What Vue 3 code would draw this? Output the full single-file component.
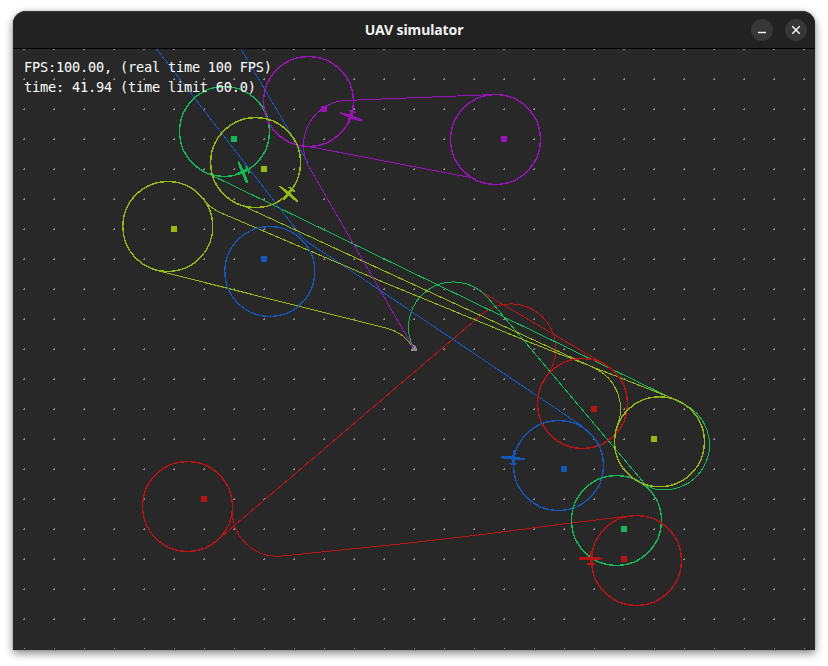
<script setup>
const RED = '#b81414'
const GREEN = '#14b857'
const BLUE = '#1457b8'
const YELLOW = '#98b814'
const PURPLE = '#9814b8'

const cols = Array.from({ length: 27 }, (_, i) => 24 + i * 30)
const rows = Array.from({ length: 21 }, (_, i) => 49 + i * 30)
const dots = rows.flatMap((y) =>
  cols.map((x) => `M${x} ${y - 1}h1v2h-2v-1h1z`)
).join('')

const routes = [
  { color: RED, d: 'M480 291L605.2 364.7' },
  { color: RED, d: 'M216.7 540.6L481.2 315A45 45 0 0 1 546.5 376.3' },
  { color: RED, d: 'M232.4 509A45 45 0 0 0 282 556L400 544L453 538L490 533.5L571 523L631 515.8' },
  { color: GREEN, d: 'M205 172L683.2 403.9A45 45 0 0 1 645.8 485.8' },
  { color: GREEN, d: 'M413.3 347.1A45 45 0 0 1 487.8 297.8L650.8 491' },
  { color: BLUE, d: 'M156.5 49L303 238.3Q308 243 330 256.7L583 426.7' },
  { color: BLUE, d: 'M241 49L308 163' },
  { color: YELLOW, d: 'M237 203L594.3 368A45 45 0 0 1 617.5 425.3' },
  { color: YELLOW, d: 'M202.3 198.2A45 45 0 0 0 219.4 212.2L380 280.8L530 342.4L676.8 400' },
  { color: YELLOW, d: 'M156.7 270.5L386 328A45 45 0 0 1 413.5 348' },
]

const homeward = 'M494 94.5L350 100.3A45 45 0 0 0 309.5 167.7L413.5 348M303 146.3L313 147.3L473 178'

const orbits = [
  { x: 224.5, y: 131.5, color: GREEN },
  { x: 269.8, y: 271.5, color: BLUE },
  { x: 308.5, y: 101.5, color: PURPLE },
  { x: 495.5, y: 139.5, color: PURPLE },
  { x: 582.5, y: 403.5, color: RED },
  { x: 187.5, y: 506.5, color: RED },
  { x: 558.5, y: 465.5, color: BLUE },
  { x: 616.5, y: 520.5, color: GREEN },
  { x: 636.5, y: 560.5, color: RED },
  { x: 255.6, y: 162.6, color: YELLOW },
  { x: 167.8, y: 226.5, color: YELLOW },
  { x: 659.5, y: 441.8, color: YELLOW },
]

const targets = [
  { x: 234, y: 139, color: GREEN },
  { x: 264, y: 169, color: YELLOW },
  { x: 174, y: 229, color: YELLOW },
  { x: 264, y: 259, color: BLUE },
  { x: 324, y: 109, color: PURPLE },
  { x: 504, y: 139, color: PURPLE },
  { x: 594, y: 409, color: RED },
  { x: 654, y: 439, color: YELLOW },
  { x: 564, y: 469, color: BLUE },
  { x: 624, y: 529, color: GREEN },
  { x: 624, y: 559, color: RED },
  { x: 204, y: 499, color: RED },
]

const uavs = [
  { x: 591.3, y: 558.6, heading: 0, color: RED },
  { x: 513.4, y: 458.2, heading: 5, color: BLUE },
  { x: 242.7, y: 171.9, heading: -113, color: GREEN },
  { x: 288.5, y: 193.6, heading: -140, color: YELLOW },
  { x: 350.7, y: 116.6, heading: -160, color: PURPLE },
]
</script>

<template>
  <main class="desktop">
    <section class="window">
      <header class="titlebar">
        <span class="spacer"></span>
        <h1 class="title">UAV simulator</h1>
        <div class="controls">
          <button class="control" aria-label="Minimize">
            <svg width="22" height="22"><path d="M7 13.5h8" /></svg>
          </button>
          <button class="control" aria-label="Close">
            <svg width="22" height="22"><path d="M7.3 7.3l7.4 7.4M14.7 7.3l-7.4 7.4" /></svg>
          </button>
        </div>
      </header>
      <div class="viewport">
        <svg class="scene" width="800" height="600" viewBox="14 49 800 600" shape-rendering="crispEdges">
          <path :d="dots" fill="#8c8c8c" />
          <g fill="none">
            <path v-for="(r, i) in routes" :key="i" :d="r.d" :stroke="r.color" stroke-width="1" />
            <circle v-for="(o, i) in orbits" :key="i" :cx="o.x" :cy="o.y" r="45" :stroke="o.color" stroke-width="1.3" />
          </g>
          <path d="M413 345h2v1h1v2h1v3h-6v-2h1v-2h1z" fill="#8c8c8c" />
          <path :d="homeward" fill="none" :stroke="PURPLE" />
          <rect v-for="(t, i) in targets" :key="i" :x="t.x - 3" :y="t.y - 3" width="6" height="6" :fill="t.color" />
          <g v-for="(u, i) in uavs" :key="i" :transform="`translate(${u.x} ${u.y}) rotate(${u.heading})`" :fill="u.color">
            <path d="M-12 -1.2L-1.3 -1.6L-.8 -8H1L1.5 -1.5L11.5 -.9V.8L1.6 1.6L1.3 4.6H4V5.9L0 6.6L-4 6.3V4.7H-1.3L-1.6 1.6L-12 1.2Z" />
          </g>
        </svg>
        <pre class="stats">FPS:100.00, (real time 100 FPS)
time: 41.94 (time limit 60.0)</pre>
      </div>
    </section>
  </main>
</template>

<style>
body {
  background: #fff;
}
</style>

<style scoped>
.desktop {
  box-sizing: border-box;
  width: 828px;
  height: 666px;
  padding: 11px 13px 16px;
  overflow: hidden;
}
.window {
  width: 802px;
  height: 639px;
  box-sizing: border-box;
  border-radius: 13px 13px 0 0;
  background: #282828;
  box-shadow: 0 3px 9px rgba(0, 0, 0, 0.5), 0 0 1px rgba(0, 0, 0, 0.5);
}
.titlebar {
  box-sizing: border-box;
  height: 38px;
  padding: 0 8px;
  display: grid;
  grid-template-columns: 1fr auto 1fr;
  align-items: center;
  background: #222;
  border-top: 1px solid #393939;
  border-bottom: 1px solid #000;
  border-radius: 13px 13px 0 0;
}
.title {
  margin: 0;
  font: 700 14px/20px "Noto Sans", "Open Sans", sans-serif;
  letter-spacing: -0.1px;
  color: #f2f2f2;
}
.controls {
  display: flex;
  justify-content: flex-end;
  gap: 12px;
}
.control {
  width: 22px;
  height: 22px;
  padding: 0;
  border: 0;
  border-radius: 50%;
  background: #373737;
}
.control svg {
  display: block;
  fill: none;
  stroke: #fff;
  stroke-width: 1.4;
}
.viewport {
  display: grid;
  width: 800px;
  height: 600px;
  margin: 0 1px;
}
.scene,
.stats {
  grid-area: 1 / 1;
}
.scene {
  display: block;
}
.stats {
  margin: 0;
  padding: 8px 10px;
  font: 13.6px/20px "DejaVu Sans Mono", monospace;
  letter-spacing: -0.19px;
  color: #fff;
}
</style>
